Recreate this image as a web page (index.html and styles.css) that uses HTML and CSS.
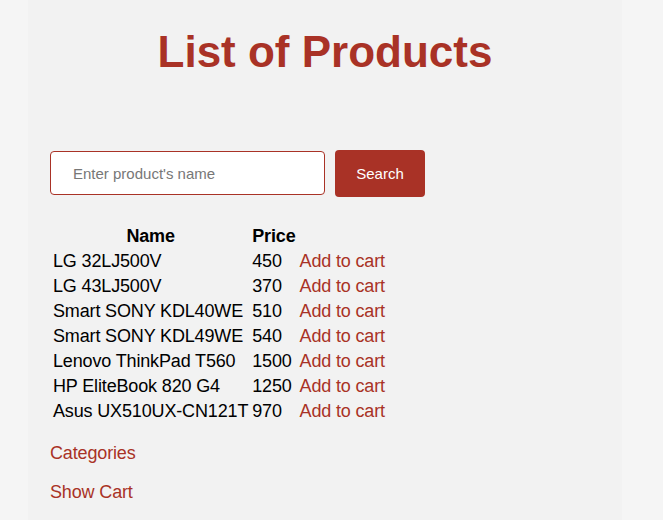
FILE: index.html
```html
<!DOCTYPE html>
<html lang="en">
<head>
<meta charset="utf-8">
<title>List of Products</title>
<link rel="stylesheet" href="styles.css">
</head>
<body>
<div class="container">
  <h1 class="title">List of Products</h1>
  <form class="search" onsubmit="return false">
    <input class="search-input" type="text" placeholder="Enter product's name">
    <button class="search-btn" type="submit">Search</button>
  </form>
  <table class="products">
    <thead>
      <tr><th>Name</th><th>Price</th><th></th></tr>
    </thead>
    <tbody>
      <tr><td>LG 32LJ500V</td><td>450</td><td><a class="link" href="#">Add to cart</a></td></tr>
      <tr><td>LG 43LJ500V</td><td>370</td><td><a class="link" href="#">Add to cart</a></td></tr>
      <tr><td>Smart SONY KDL40WE</td><td>510</td><td><a class="link" href="#">Add to cart</a></td></tr>
      <tr><td>Smart SONY KDL49WE</td><td>540</td><td><a class="link" href="#">Add to cart</a></td></tr>
      <tr><td>Lenovo ThinkPad T560</td><td>1500</td><td><a class="link" href="#">Add to cart</a></td></tr>
      <tr><td>HP EliteBook 820 G4</td><td>1250</td><td><a class="link" href="#">Add to cart</a></td></tr>
      <tr><td>Asus UX510UX-CN121T</td><td>970</td><td><a class="link" href="#">Add to cart</a></td></tr>
    </tbody>
  </table>
  <p class="nav"><a class="link" href="#">Categories</a></p>
  <p class="nav"><a class="link" href="#">Show Cart</a></p>
</div>
</body>
</html>
```
FILE: styles.css
```css
html, body {
  margin: 0;
  padding: 0;
}
body {
  background: #f5f5f5;
  font-family: "Liberation Sans", Arial, sans-serif;
  font-size: 18px;
  color: #000;
}
.container {
  width: 594px;
  margin-left: 28px;
  box-sizing: border-box;
  padding: 27px 22px 20px;
  background: #f2f2f2;
  min-height: 100vh;
}
.title {
  margin: 0;
  text-align: center;
  font-size: 44px;
  font-weight: bold;
  color: #a93226;
}
.search {
  display: flex;
  align-items: flex-start;
  gap: 10px;
  margin-top: 73px;
}
.search-input {
  width: 275px;
  height: 44px;
  margin-top: 1px;
  box-sizing: border-box;
  border: 1px solid #a93226;
  border-radius: 4px;
  background: #fff;
  padding: 0 22px;
  font-family: "Liberation Sans", Arial, sans-serif;
  font-size: 15px;
  outline: none;
}
.search-input::placeholder {
  color: #777;
}
.search-btn {
  height: 47px;
  width: 90px;
  border: none;
  border-radius: 4px;
  background: #a93226;
  color: #fff;
  font-family: "Liberation Sans", Arial, sans-serif;
  font-size: 15px;
  padding: 0;
  cursor: pointer;
}
.products {
  margin-top: 26px;
  font-size: 18px;
  letter-spacing: -0.15px;
}
.products th,
.products td {
  padding: 1px;
}
.products td {
  text-align: left;
}
.link {
  color: #a93226;
  text-decoration: none;
}
.nav {
  margin: 18px 0;
  font-size: 18px;
  letter-spacing: -0.15px;
}
.nav + .nav {
  margin-top: 17px;
}
```
